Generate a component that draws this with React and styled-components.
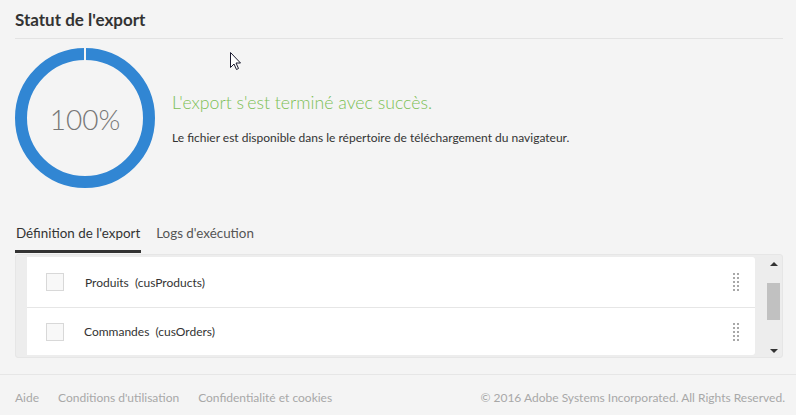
import React from "react";
import styled, { createGlobalStyle } from "styled-components";

const Global = createGlobalStyle`
  html, body { margin: 0; padding: 0; background: #f4f4f4; }
  body { font-family: Lato, "Open Sans", sans-serif; color: #333; }
  * { box-sizing: border-box; }
`;

const Page = styled.div`
  position: relative;
  width: 796px;
  height: 415px;
  display: flex;
  flex-direction: column;
  background: #f4f4f4;
  overflow: hidden;
`;

const Main = styled.div`
  padding: 0 13px 0 15px;
  display: flex;
  flex-direction: column;
`;

const Header = styled.div`
  height: 39px;
  display: flex;
  align-items: center;
  border-bottom: 1px solid #e3e3e3;
`;

const Title = styled.h2`
  margin: 0;
  padding-top: 0;
  font-size: 17px;
  font-weight: 700;
  color: #333;
`;

const StatusRow = styled.div`
  display: flex;
  align-items: center;
  gap: 17px;
  margin-top: 9px;
`;

const Ring = styled.div`
  position: relative;
  width: 140px;
  height: 140px;
  flex: none;
  svg { display: block; }
`;

const Percent = styled.div`
  position: absolute;
  inset: 0;
  display: flex;
  align-items: center;
  justify-content: center;
  font-size: 28px;
  font-weight: 300;
  color: #777;
  padding-top: 1px;
`;

const StatusText = styled.div`
  display: flex;
  flex-direction: column;
  gap: 17px;
  margin-top: 0px;
`;

const Success = styled.div`
  font-size: 17.7px;
  font-weight: 300;
  color: #7cbf55;
`;

const Info = styled.div`
  font-size: 12px;
  color: #333;
`;

const Tabs = styled.div`
  display: flex;
  gap: 14px;
  margin-top: 37px;
`;

const Tab = styled.div`
  font-size: 13.4px;
  padding: 0 1px 9px;
  color: ${(p) => (p.$active ? "#333" : "#555")};
  border-bottom: 3px solid ${(p) => (p.$active ? "#333" : "transparent")};
`;

const Panel = styled.div`
  margin-top: 1px;
  height: 104px;
  display: flex;
  background: #ededed;
  border: 1px solid #e6e6e6;
  border-radius: 3px;
  padding: 2px 0 2px 11px;
`;

const List = styled.div`
  flex: 1;
  background: #fff;
  border-radius: 0 3px 3px 0;
  display: flex;
  flex-direction: column;
`;

const Row = styled.div`
  height: ${(p) => (p.$first ? 50 : 48)}px;
  display: flex;
  align-items: center;
  padding: 0 16px 0 19px;
  border-top: ${(p) => (p.$first ? "none" : "1px solid #e6e6e6")};
`;

const Check = styled.div`
  width: 18px;
  height: 18px;
  border: 1px solid #d8d8d8;
  background: #f8f8f8;
  flex: none;
`;

const Label = styled.div`
  margin-left: ${(p) => p.$ml}px;
  flex: 1;
  font-size: 12px;
  color: #333;
`;

const Handle = styled.div`
  display: grid;
  grid-template-columns: repeat(2, 2px);
  grid-auto-rows: 2px;
  gap: 2px;
  span { background: #a8a8a8; }
`;

const Scroll = styled.div`
  width: 27px;
  display: flex;
  flex-direction: column;
  align-items: center;
  padding: 5px 0 2px 0;
`;

const Arrow = styled.div`
  width: 0;
  height: 0;
  border-left: 4px solid transparent;
  border-right: 4px solid transparent;
  ${(p) => (p.$down ? "border-top: 4px solid #333;" : "border-bottom: 4px solid #333;")}
  margin-left: 10px;
`;

const Thumb = styled.div`
  width: 13px;
  height: 37px;
  background: #c1c1c1;
  margin: 17px 0 0 10px;
`;

const Spacer = styled.div`
  flex: 1;
`;

const Footer = styled.div`
  margin-top: auto;
  height: 41px;
  border-top: 1px solid #e6e6e6;
  display: flex;
  align-items: center;
  padding: 5px 11px 0 15px;
  font-size: 12px;
  color: #a8a8a8;
`;

const FooterLinks = styled.div`
  display: flex;
  gap: 19px;
  flex: 1;
`;

const Cursor = styled.svg`
  position: absolute;
  left: 230px;
  top: 52px;
`;

function DragHandle() {
  return (
    <Handle>
      {Array.from({ length: 10 }).map((_, i) => (
        <span key={i} />
      ))}
    </Handle>
  );
}

export default function App() {
  return (
    <Page>
      <Global />
      <Main>
        <Header>
          <Title>Statut de l'export</Title>
        </Header>
        <StatusRow>
          <Ring>
            <svg width="140" height="140" viewBox="0 0 140 140">
              <circle cx="70" cy="70" r="64" fill="none" stroke="#3186d3" strokeWidth="12" />
              <rect x="69" y="0" width="2" height="14" fill="#f4f4f4" />
            </svg>
            <Percent>100%</Percent>
          </Ring>
          <StatusText>
            <Success>L'export s'est terminé avec succès.</Success>
            <Info>Le fichier est disponible dans le répertoire de téléchargement du navigateur.</Info>
          </StatusText>
        </StatusRow>
        <Tabs>
          <Tab $active>Définition de l'export</Tab>
          <Tab>Logs d'exécution</Tab>
        </Tabs>
        <Panel>
          <List>
            <Row $first>
              <Check />
              <Label $ml={21}>Produits&nbsp; (cusProducts)</Label>
              <DragHandle />
            </Row>
            <Row>
              <Check />
              <Label $ml={20}>Commandes&nbsp; (cusOrders)</Label>
              <DragHandle />
            </Row>
          </List>
          <Scroll>
            <Arrow />
            <Thumb />
            <Spacer />
            <Arrow $down />
          </Scroll>
        </Panel>
      </Main>
      <Footer>
        <FooterLinks>
          <span>Aide</span>
          <span>Conditions d'utilisation</span>
          <span>Confidentialité et cookies</span>
        </FooterLinks>
        <span>© 2016 Adobe Systems Incorporated. All Rights Reserved.</span>
      </Footer>
      <Cursor width="12" height="19" viewBox="0 0 12 19">
        <path d="M0.5 0.5 L0.5 15.5 L4 12 L6.5 17.5 L8.5 16.5 L6 11 L10.5 11 Z" fill="#fff" stroke="#1a1a2e" strokeWidth="1" />
      </Cursor>
    </Page>
  );
}
